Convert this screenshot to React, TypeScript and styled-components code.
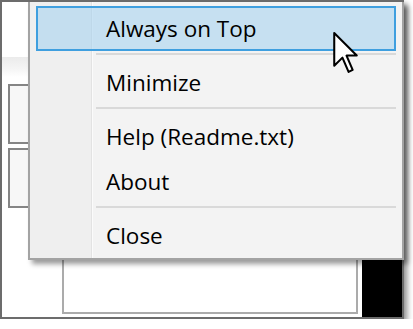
import React from 'react';
import styled, { createGlobalStyle } from 'styled-components';

const GlobalStyle = createGlobalStyle`
  html, body {
    margin: 0;
    padding: 0;
    background: #ffffff;
    overflow: hidden;
  }
  body {
    font-family: "Open Sans", "Noto Sans", "Liberation Sans", sans-serif;
  }
`;

const Window = styled.div`
  position: relative;
  width: 400px;
  height: 315px;
  border: 2px solid #6c6c6c;
  background: #ffffff;
  box-shadow: 3px 4px 6px rgba(0, 0, 0, 0.45);
  display: flex;
  flex-direction: column;
`;

const TopArea = styled.div`
  height: 55px;
  background: #ffffff;
`;

const Band = styled.div`
  height: 20px;
  background: linear-gradient(to bottom, #ebebeb, #f5f5f5 60%, #ffffff);
`;

const Main = styled.div`
  flex: 1;
  display: flex;
  padding: 7px 0 0 6px;
  gap: 4px;
`;

const ButtonColumn = styled.div`
  width: 50px;
  display: flex;
  flex-direction: column;
  gap: 4px;
`;

const SideButton = styled.div`
  height: 56px;
  border: 2px solid #858585;
  background: #f7f7f7;
`;

const TextBox = styled.div`
  flex: 1;
  margin: 100px 0 3px;
  border: 2px solid #ababab;
  background: #ffffff;
`;

const BlackPanel = styled.div`
  width: 40px;
  margin-top: 140px;
  background: #000000;
`;

const Menu = styled.div`
  position: absolute;
  left: 26px;
  top: 0;
  width: 372px;
  border: 2px solid #a3a3a3;
  border-top: none;
  padding: 4px 0 0;
  box-sizing: content-box;
  background: linear-gradient(
    to right,
    #efefef 0 61px,
    #e3e3e3 61px 62px,
    #fbfbfb 62px 63px,
    #f3f3f3 63px
  );
  box-shadow: 4px 4px 5px rgba(0, 0, 0, 0.4);
`;

const Item = styled.div<{ $active?: boolean }>`
  box-sizing: content-box;
  height: 39px;
  margin: 0 6px;
  padding: 2px 0 0 68px;
  display: flex;
  align-items: center;
  border: 2px solid ${(p) => (p.$active ? '#3f9fdf' : 'transparent')};
  background: ${(p) => (p.$active ? 'rgba(160, 208, 238, 0.55)' : 'transparent')};
  font-size: 22.5px;
  line-height: 1;
  color: #000000;
`;

const Separator = styled.div`
  height: 2px;
  margin: 2px 6px 5px 66px;
  background: #d9d9d9;
`;

const Cursor = styled.svg`
  position: absolute;
  left: 330px;
  top: 29px;
`;

const items: (string | null)[] = [
  'Always on Top',
  null,
  'Minimize',
  null,
  'Help (Readme.txt)',
  'About',
  null,
  'Close',
];

export default function App() {
  return (
    <>
      <GlobalStyle />
      <Window>
        <TopArea />
        <Band />
        <Main>
          <ButtonColumn>
            <SideButton />
            <SideButton />
          </ButtonColumn>
          <TextBox />
          <BlackPanel />
        </Main>
        <Menu>
          {items.map((label, i) =>
            label === null ? (
              <Separator key={i} />
            ) : (
              <Item key={i} $active={i === 0}>
                {label}
              </Item>
            )
          )}
        </Menu>
        <Cursor width="27" height="43" viewBox="0 0 13 21">
          <path
            d="M1 1 L1 17 L5 13 L8 20 L10 19 L7 12 L12 12 Z"
            fill="#ffffff"
            stroke="#000000"
            strokeWidth="1"
            strokeLinejoin="round"
          />
        </Cursor>
      </Window>
    </>
  );
}
